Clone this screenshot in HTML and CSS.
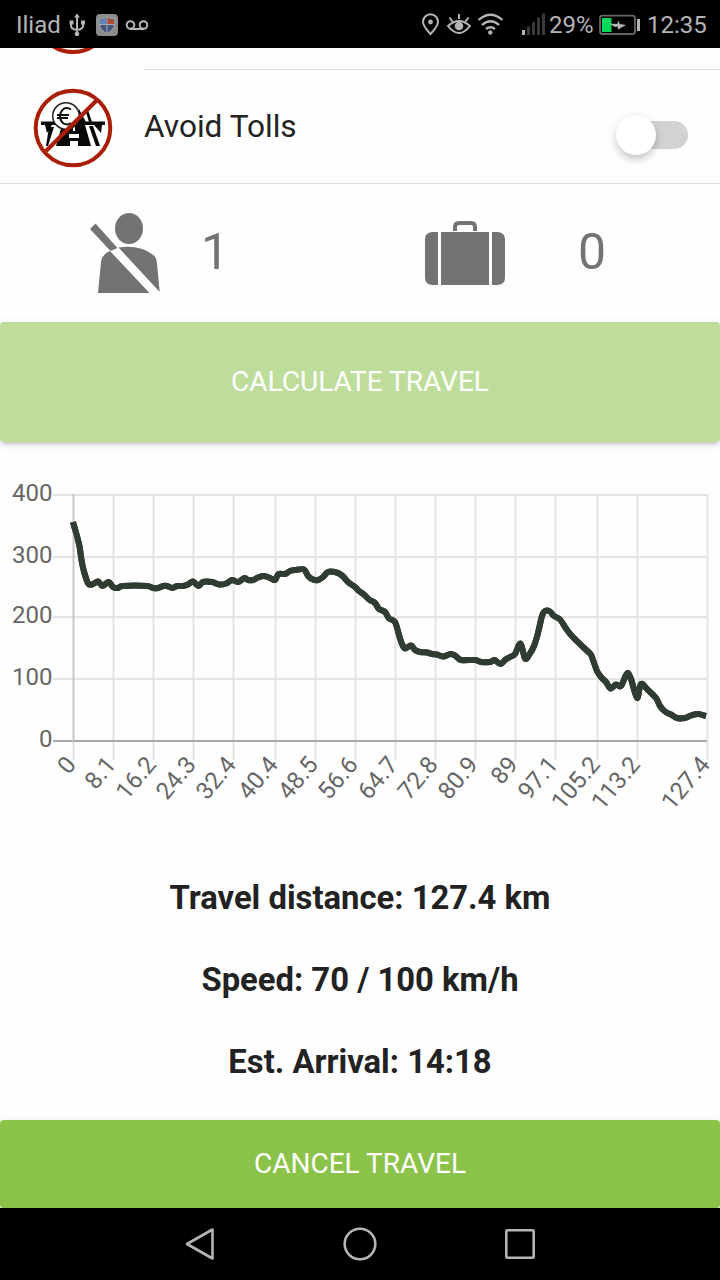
FILE: index.html
```
<!DOCTYPE html>
<html lang="en">
<head>
    <meta charset="UTF-8">
    <meta name="viewport" content="width=device-width, initial-scale=1.0">
    <title>Travel</title>
    <link rel="stylesheet" href="styles.css">
</head>
<body>
    <div class="status-bar">
        <span>Iliad</span>
        <svg class="notifications" width="84" height="30" viewBox="67 10 84 30" fill="none" stroke="#b5b5b5" stroke-width="2">
            <!-- usb -->
            <path d="M77 16v17M71 23v3q0 3 6 4M83 23v3q0 3-6 4"/>
            <path d="M77 13.500l3 4h-6zM69.500 20.500h4v4h-4zM81 20.500h4v4h-4z" fill="#b5b5b5" stroke="none"/>
            <circle cx="77" cy="34" r="2.300" fill="#b5b5b5" stroke="none"/>
            <!-- shield app -->
            <rect x="96" y="14" width="22" height="22" rx="4" fill="#8c8c8c" stroke="none"/>
            <path d="M99 19q4 0 8-2q4 2 8 2q1 10-8 15q-9-5-8-15z" fill="#415580" stroke="#aaa" stroke-width="1"/>
            <path d="M107.500 18q3 1.500 6.500 2v4h-6.500z" fill="#b44a2d" stroke="none"/>
            <path d="M100 20q3 0 6.500-2v6H100z" fill="#6685ba" stroke="none"/>
            <path d="M107 17v16M99 24.500h16" stroke="#aaa" stroke-width="1"/>
            <!-- voicemail -->
            <circle cx="130.500" cy="25" r="3.800"/>
            <circle cx="143.500" cy="25" r="3.800"/>
            <path d="M130 29h14"/>
        </svg>
        <svg class="indicators" width="126" height="30" viewBox="420 10 126 30" fill="none" stroke="#b5b5b5" stroke-width="2">
            <path d="M429.500 34q-7.500-8-7.500-12a7.500 7.800 0 0 1 15 0q0 4-7.500 12z"/>
            <circle cx="429.500" cy="22" r="2.400" fill="#b5b5b5" stroke="none"/>
            <path d="M447 26q11-10 22 0q-11 14-22 0zM458 14v5M448.500 17.500l3 4M467.500 17.500l-3 4"/>
            <circle cx="458" cy="26" r="4.300" fill="#b5b5b5" stroke="none"/>
            <path d="M477.500 20q12-10.500 24 0M481 25q8.500-7.500 17 0M485 29q4.500-3.500 9 0" stroke-width="2.300"/>
            <circle cx="489.300" cy="32.500" r="2.200" fill="#b5b5b5" stroke="none"/>
            <path d="M522.500 30v5" stroke-width="3"/>
            <path d="M527.500 26.500v8.500M532.500 22v13M537.500 17.500v17.500M542.500 13.500v21.500" stroke="#393939" stroke-width="3"/>
        </svg>
        <span class="percent">29%</span>
        <svg class="battery" width="42" height="22" viewBox="598 14 42 22">
            <rect x="599" y="15.700" width="35" height="18.300" rx="2.500" fill="none" stroke="#666" stroke-width="1.800"/>
            <path d="M601 18h9.500v14H601z" fill="#00d95a"/>
            <path d="M608 23.500l8 0.500 2-3.500 0.500 3.500 6.500 1-8 4.500-0.500-3-2.500 0.500z" fill="#b5b5b5"/>
            <path d="M636 19h3v12h-3z" fill="#b5b5b5"/>
        </svg>
        <span class="clock">12:35</span>
    </div>

    <main class="content">
        <div class="previous-row">
            <svg width="78" height="6" viewBox="0 73 78 6">
                <circle cx="39" cy="39.500" r="37.500" fill="none" stroke="#aa1e05" stroke-width="4"/>
            </svg>
            <div class="inset-line"></div>
        </div>

        <div class="option-row">
            <svg class="toll-icon" width="80" height="80" viewBox="33 88 80 80">
                <circle cx="73" cy="128" r="37.300" fill="#fff"/>
                <path d="M62 125h23l6 21H78v-5h-8v5H56zM49 127h5l-6 19h-2zM89 126h4l7 20h-4zM41 121.500h64v3.500H41zM45 125h7l-5 8zM94 125h8l-1 8zM79 109l7 13h-9zM85 109l3 1 4 12h-3z" fill="#080808"/>
                <path d="M74 127v4M70 135h8v2h-8z" stroke="#fff" stroke-width="2" fill="#fff"/>
                <circle cx="66" cy="116" r="13.300" fill="#fff" stroke="#222" stroke-width="1.500"/>
                <path d="M71 109.500q-4-2.500-7.500-0.500q-3.500 3-3.500 7.500q0 4 3.500 7q3.500 2 7.500-0.500M57 115h12M57 118h11" fill="none" stroke="#111" stroke-width="2"/>
                <path d="M46 151l51-51" stroke="#aa1e05" stroke-width="4"/>
                <circle cx="73" cy="128" r="37.300" fill="none" stroke="#aa1e05" stroke-width="4"/>
            </svg>
            <span class="option-label">Avoid Tolls</span>
            <span class="toggle"></span>
        </div>

        <div class="counters">
            <div class="counter passengers">
                <svg width="72" height="82" viewBox="89 212 72 82" fill="#737373">
                    <ellipse cx="129" cy="228.500" rx="14" ry="15.500"/>
                    <path d="M95.500 223.500l22 24.500-7 3L90 229z"/>
                    <path d="M118.500 247.500q21-3 34 7q4 2 4.500 9l2.700 28.500zM110 251l39.500 42H98l3-31q1-8 9-11z"/>
                </svg>
                <span>1</span>
            </div>
            <div class="counter luggage">
                <svg width="80" height="66" viewBox="425 220 80 66" fill="#737373">
                    <path d="M432 232h6v53h-6q-7-1-7-7v-39q0-6 7-7zM441 232h48v53h-48zM492 232h6q7 1 7 7v39q0 6-7 7h-6z"/>
                    <path d="M455 231v-4q0-4 4-4h12q4 0 4 4v4" fill="none" stroke="#737373" stroke-width="4"/>
                </svg>
                <span>0</span>
            </div>
        </div>

        <button class="button calculate" disabled>Calculate travel</button>

        <svg class="chart" width="720" height="370" viewBox="0 460 720 370">
            <path class="elevation" id="elevation"/>
            <path class="grid" d="M53 495H707M53 557H707M53 617H707M53 679H707M113.500 494V760M153.500 494V760M193.500 494V760M233.500 494V760M275.500 494V760M315.500 494V760M355.500 494V760M395.500 494V760M435.500 494V760M475.500 494V760M515.500 494V760M555.500 494V760M597.500 494V760M637.500 494V760M707.500 494V760M73.500 741V760"/>
            <path class="axis-x" d="M53 741H707"/>
            <path class="axis-y" d="M73.500 494V741"/>
            <use href="#elevation"/>
            <g class="labels-y">
                <text x="52.500" y="501">400</text>
                <text x="52.500" y="563">300</text>
                <text x="52.500" y="623">200</text>
                <text x="52.500" y="685">100</text>
                <text x="52.500" y="747">0</text>
            </g>
            <g class="labels-x">
                <text transform="translate(71 760) rotate(-50)" y="8">0</text>
                <text transform="translate(111 760) rotate(-50)" y="8">8.1</text>
                <text transform="translate(151 760) rotate(-50)" y="8">16.2</text>
                <text transform="translate(191 760) rotate(-50)" y="8">24.3</text>
                <text transform="translate(231 760) rotate(-50)" y="8">32.4</text>
                <text transform="translate(273 760) rotate(-50)" y="8">40.4</text>
                <text transform="translate(313 760) rotate(-50)" y="8">48.5</text>
                <text transform="translate(353 760) rotate(-50)" y="8">56.6</text>
                <text transform="translate(393 760) rotate(-50)" y="8">64.7</text>
                <text transform="translate(433 760) rotate(-50)" y="8">72.8</text>
                <text transform="translate(473 760) rotate(-50)" y="8">80.9</text>
                <text transform="translate(513 760) rotate(-50)" y="8">89</text>
                <text transform="translate(553 760) rotate(-50)" y="8">97.1</text>
                <text transform="translate(595 760) rotate(-50)" y="8">105.2</text>
                <text transform="translate(635 760) rotate(-50)" y="8">113.2</text>
                <text transform="translate(705 760) rotate(-50)" y="8">127.4</text>
            </g>
        </svg>

        <div class="summary">
            <h2>Travel distance: 127.4 km</h2>
            <h2>Speed: 70 / 100 km/h</h2>
            <h2>Est. Arrival: 14:18</h2>
        </div>

        <button class="button cancel">Cancel travel</button>
    </main>

    <nav class="nav-bar">
        <svg width="30" height="36" viewBox="0 0 30 36"><path d="M27.500 3.500v29L2 18z"/></svg>
        <svg width="36" height="36" viewBox="0 0 36 36"><circle cx="18" cy="18" r="15.300"/></svg>
        <svg width="32" height="36" viewBox="0 0 32 36"><rect x="2.300" y="4.300" width="27.400" height="27.400" rx="1"/></svg>
    </nav>

<script>
    const points = [
        [73, 522], [79, 544], [82, 563], [85, 575], [88.5, 584], [93, 584], [98, 581.5], [102.5, 586],
        [108.5, 582], [113, 587], [118, 588], [123, 586], [147, 586], [153, 588], [158, 588], [163, 586],
        [167, 586], [172.5, 588], [177, 586], [183, 586], [188, 584.5], [193, 581.5], [198.5, 586],
        [203, 582], [212, 582], [219, 584.5], [226, 583.5], [232, 580], [238, 582], [244.5, 578],
        [248, 580], [253, 580], [258, 577.5], [264, 576], [270, 578], [275, 580], [278.5, 574],
        [285, 574], [290, 571], [295, 570], [304, 569.5], [308, 576], [313, 579.5], [318, 580],
        [323, 577], [328, 572], [335, 572], [342, 575.5], [348, 582], [355, 587], [359, 591], [364, 594.5],
        [369, 599.5], [375, 603], [379, 609], [385, 612], [389, 618.5], [395, 622], [399, 635],
        [402, 644], [405, 648.5], [411, 645.5], [415, 650], [420, 652], [427, 652.5], [432, 654],
        [437, 654.5], [443, 656.5], [450.5, 654], [455, 655.5], [461, 660], [475, 660], [481, 662],
        [490, 662], [494.5, 660], [500.5, 664], [505, 660], [510, 657], [515, 654], [520.5, 643.5],
        [525, 658.5], [529, 655], [534, 646], [538, 633], [542, 616], [545, 611], [550, 611.5],
        [554, 616], [560, 619.5], [565, 627], [571, 635], [583, 647], [590.5, 654], [593, 660],
        [597, 671], [601, 677], [606, 682], [610.5, 688.5], [616, 684.5], [621, 686], [627, 673.5],
        [631, 679], [637, 698], [641, 684], [648, 690], [656, 698], [660, 706], [665, 711.5],
        [671, 714.5], [677, 718], [685, 718], [691, 715.5], [698, 714], [706, 716]
    ];

    // smooth line through all points
    let path = `M${points[0]}`;
    for (let i = 0; i < points.length - 1; i++) {
        const before = points[i - 1] || points[i];
        const from = points[i];
        const to = points[i + 1];
        const after = points[i + 2] || to;
        const c1 = [from[0] + (to[0] - before[0]) / 6, from[1] + (to[1] - before[1]) / 6];
        const c2 = [to[0] - (after[0] - from[0]) / 6, to[1] - (after[1] - from[1]) / 6];
        path += `C${c1} ${c2} ${to}`;
    }
    document.getElementById('elevation').setAttribute('d', path);
</script>
</body>
</html>
```
FILE: styles.css
```
:root {
    --primary: #8bc34a;
    --text: #222;
    --icon: #737373;
    --system: #b5b5b5;
    --border: #dedede;
}

* {
    box-sizing: border-box;
    margin: 0;
    padding: 0;
}

body {
    width: 720px;
    height: 1280px;
    display: flex;
    flex-direction: column;
    overflow: hidden;
    background: #fefefe;
    color: var(--text);
    font-family: Roboto, sans-serif;
}

svg {
    display: block;
    flex: none;
}

.status-bar {
    height: 48px;
    flex: none;
    display: flex;
    align-items: center;
    padding: 2px 15px 0 16px;
    background: #000;
    color: var(--system);
    font-size: 24px;
}

.notifications {
    width: 84px;
    margin: 0 0 1px 6px;
}

.status-bar span:first-child {
    width: 45px;
}

.indicators {
    margin: 0 0 1px auto;
}

.percent {
    width: 43px;
    margin: 0 7px 0 2px;
}

.clock {
    width: 58px;
    margin-left: 6px;
}

.content {
    flex: 1;
    display: flex;
    flex-direction: column;
}

.previous-row {
    height: 22px;
    padding-left: 34px;
    display: flex;
    flex-direction: column;
    justify-content: space-between;
}

.inset-line {
    height: 1px;
    margin-left: 110px;
    background: var(--border);
}

.option-row {
    height: 114px;
    display: flex;
    align-items: center;
    padding: 2px 32px 0 33px;
    border-bottom: 1px solid var(--border);
}

.option-label {
    margin: 0 auto 2px 31px;
    font-size: 31.6px;
}

.toggle {
    width: 72px;
    height: 40px;
    padding-left: 16px;
    margin-top: 14px;
    display: flex;
    align-items: center;
}

.toggle::before {
    content: "";
    width: 56px;
    height: 28px;
    border-radius: 14px;
    background: #d2d2d2;
}

.toggle::after {
    content: "";
    flex: none;
    width: 40px;
    height: 40px;
    margin-left: -72px;
    border-radius: 50%;
    background: #fff;
    box-shadow: 0 6px 8px -2px rgba(0, 0, 0, 0.16), 0 2px 10px rgba(0, 0, 0, 0.12);
}

.counters {
    height: 138px;
    display: grid;
    grid-template-columns: 1fr 1fr;
    color: var(--icon);
    font-size: 50px;
}

.counter {
    display: flex;
    align-items: center;
}

.passengers {
    padding-left: 89px;
    gap: 40px;
}

.luggage {
    padding-left: 65px;
    gap: 73px;
}

.counter span {
    margin-bottom: 2px;
}

.button {
    width: 100%;
    flex: none;
    padding-bottom: 2px;
    border: 0;
    border-radius: 4px;
    background: var(--primary);
    color: #fff;
    font-family: inherit;
    font-size: 28px;
    text-transform: uppercase;
    box-shadow: 0 4px 4px rgba(0, 0, 0, 0.14), 0 6px 2px -4px rgba(0, 0, 0, 0.2), 0 2px 10px rgba(0, 0, 0, 0.12);
}

.calculate {
    height: 120px;
    opacity: 0.55;
}

.cancel {
    height: 88px;
    margin-top: auto;
}

.chart {
    margin-top: 18px;
}

.grid,
.axis-x,
.axis-y {
    fill: none;
    stroke: rgba(0, 0, 0, 0.1);
    stroke-width: 2;
}

.axis-x {
    stroke: #a9a9a9;
}

.axis-y {
    stroke: #c8c8c8;
}

.elevation {
    fill: none;
    stroke: #2f3c31;
    stroke-width: 6;
    stroke-linejoin: round;
}

.labels-x,
.labels-y {
    fill: #666;
    font-size: 24px;
    text-anchor: end;
}

.summary {
    height: 290px;
    flex: none;
    padding-top: 46px;
    text-align: center;
}

.summary h2 {
    height: 82px;
    font-size: 32.8px;
    line-height: 44px;
}

.nav-bar {
    height: 72px;
    flex: none;
    display: flex;
    justify-content: space-between;
    align-items: center;
    padding: 0 184px 0 185px;
    background: #000;
    fill: none;
    stroke: var(--system);
    stroke-width: 2.6;
    stroke-linejoin: round;
}
```
